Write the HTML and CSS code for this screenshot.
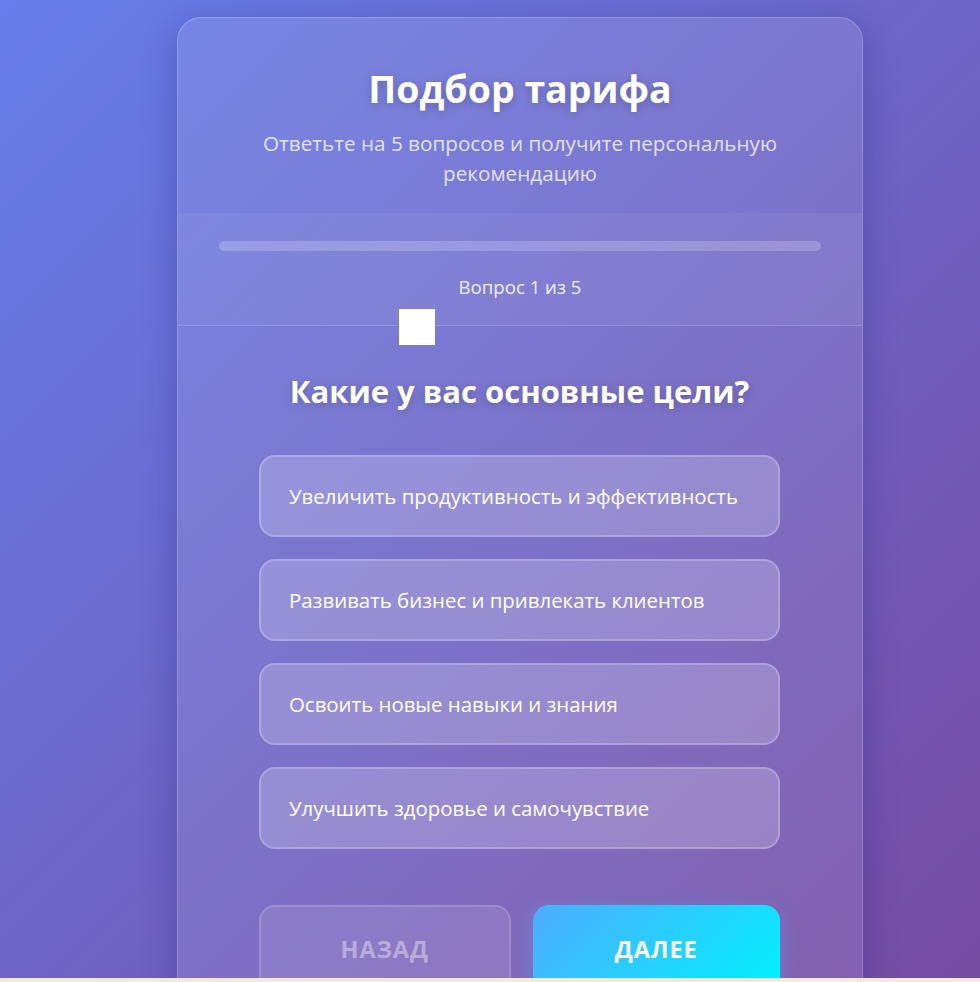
FILE: index.html
```html
<!DOCTYPE html>
<html lang="ru">
<head>
<meta charset="utf-8">
<title>Подбор тарифа</title>
<link rel="stylesheet" href="styles.css">
</head>
<body>
<div class="page">
  <div class="card">
    <div class="head">
      <h1 class="title">Подбор тарифа</h1>
      <p class="subtitle">Ответьте на 5 вопросов и получите персональную рекомендацию</p>
    </div>
    <div class="progress">
      <div class="track"><div class="fill" style="width:0%"></div></div>
      <div class="step">Вопрос 1 из 5</div>
      <div class="marker"></div>
    </div>
    <div class="body">
      <h2 class="question">Какие у вас основные цели?</h2>
      <div class="options">
        <div class="option">Увеличить продуктивность и эффективность</div>
        <div class="option">Развивать бизнес и привлекать клиентов</div>
        <div class="option">Освоить новые навыки и знания</div>
        <div class="option">Улучшить здоровье и самочувствие</div>
      </div>
      <div class="nav">
        <button class="btn btn-back">НАЗАД</button>
        <button class="btn btn-next">ДАЛЕЕ</button>
      </div>
    </div>
  </div>
</div>
</body>
</html>
```

FILE: styles.css
```css
html, body {
  margin: 0;
  padding: 0;
}
body {
  background: #f3e9dc;
  font-family: "Open Sans", "Noto Sans", sans-serif;
  color: #fff;
}
.page {
  height: 978px;
  overflow: hidden;
  background: linear-gradient(135deg, #667eea 0%, #764ba2 100%);
  padding: 17px 0 0 177px;
  box-sizing: border-box;
}
.card {
  width: 686px;
  box-sizing: border-box;
  background: rgba(255, 255, 255, 0.1);
  border: 1px solid rgba(255, 255, 255, 0.2);
  border-radius: 24px;
  box-shadow: 0 8px 32px rgba(31, 38, 135, 0.37);
  overflow: hidden;
}
.head {
  padding: 46px 36px 25px;
  text-align: center;
}
.title {
  margin: 0;
  font-size: 37.5px;
  font-weight: 700;
  line-height: 50px;
  text-shadow: 0 2px 10px rgba(0, 0, 0, 0.2);
}
.subtitle {
  margin: 14px 0 0;
  font-size: 20.7px;
  line-height: 30px;
  color: rgba(255, 255, 255, 0.8);
}
.progress {
  position: relative;
  background: rgba(255, 255, 255, 0.05);
  border-bottom: 1px solid rgba(255, 255, 255, 0.15);
  padding: 28px 41px 26px;
  text-align: center;
}
.track {
  height: 10px;
  border-radius: 5px;
  background: rgba(255, 255, 255, 0.2);
  overflow: hidden;
}
.fill {
  height: 100%;
  background: linear-gradient(90deg, #4facfe, #00f2fe);
}
.step {
  margin-top: 24px;
  font-size: 18.6px;
  line-height: 24px;
  color: rgba(255, 255, 255, 0.9);
}
.marker {
  position: absolute;
  left: 221px;
  top: 96px;
  width: 36px;
  height: 36px;
  background: #fff;
}
.body {
  padding: 43px 82px 40px 81px;
}
.question {
  margin: 0 0 42px;
  text-align: center;
  font-size: 31px;
  font-weight: 700;
  line-height: 44px;
  text-shadow: 0 2px 10px rgba(0, 0, 0, 0.2);
}
.options {
  display: flex;
  flex-direction: column;
  gap: 22px;
}
.option {
  height: 82px;
  box-sizing: border-box;
  display: flex;
  align-items: center;
  padding: 0 28px;
  border: 2px solid rgba(255, 255, 255, 0.22);
  border-radius: 16px;
  background: rgba(255, 255, 255, 0.2);
  font-size: 20.4px;
  color: #fff;
}
.nav {
  margin-top: 56px;
  display: flex;
  gap: 22px;
}
.btn {
  flex: 1;
  height: 88px;
  border-radius: 16px;
  font-family: inherit;
  font-size: 23.5px;
  font-weight: 700;
  letter-spacing: 1px;
  cursor: pointer;
}
.btn-back {
  background: rgba(255, 255, 255, 0.1);
  border: 2px solid rgba(255, 255, 255, 0.15);
  color: rgba(255, 255, 255, 0.4);
}
.btn-next {
  border: none;
  color: #fff;
  background: linear-gradient(135deg, #4facfe 0%, #00f2fe 100%);
  box-shadow: 0 6px 20px rgba(79, 172, 254, 0.4);
}
```
